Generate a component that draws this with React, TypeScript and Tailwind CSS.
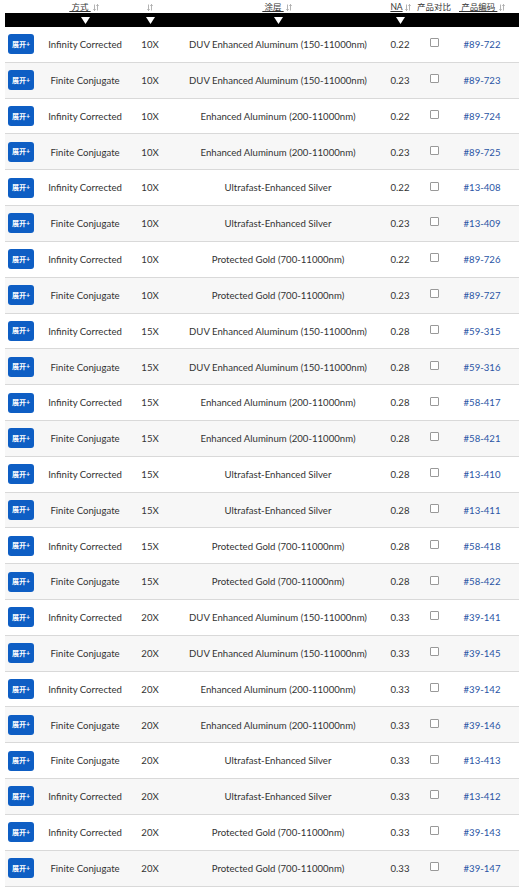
import React from "react";

type Row = [string, string, string, string, string];

const rows: Row[] = [
  ["Infinity Corrected", "10X", "DUV Enhanced Aluminum (150-11000nm)", "0.22", "#89-722"],
  ["Finite Conjugate", "10X", "DUV Enhanced Aluminum (150-11000nm)", "0.23", "#89-723"],
  ["Infinity Corrected", "10X", "Enhanced Aluminum (200-11000nm)", "0.22", "#89-724"],
  ["Finite Conjugate", "10X", "Enhanced Aluminum (200-11000nm)", "0.23", "#89-725"],
  ["Infinity Corrected", "10X", "Ultrafast-Enhanced Silver", "0.22", "#13-408"],
  ["Finite Conjugate", "10X", "Ultrafast-Enhanced Silver", "0.23", "#13-409"],
  ["Infinity Corrected", "10X", "Protected Gold (700-11000nm)", "0.22", "#89-726"],
  ["Finite Conjugate", "10X", "Protected Gold (700-11000nm)", "0.23", "#89-727"],
  ["Infinity Corrected", "15X", "DUV Enhanced Aluminum (150-11000nm)", "0.28", "#59-315"],
  ["Finite Conjugate", "15X", "DUV Enhanced Aluminum (150-11000nm)", "0.28", "#59-316"],
  ["Infinity Corrected", "15X", "Enhanced Aluminum (200-11000nm)", "0.28", "#58-417"],
  ["Finite Conjugate", "15X", "Enhanced Aluminum (200-11000nm)", "0.28", "#58-421"],
  ["Infinity Corrected", "15X", "Ultrafast-Enhanced Silver", "0.28", "#13-410"],
  ["Finite Conjugate", "15X", "Ultrafast-Enhanced Silver", "0.28", "#13-411"],
  ["Infinity Corrected", "15X", "Protected Gold (700-11000nm)", "0.28", "#58-418"],
  ["Finite Conjugate", "15X", "Protected Gold (700-11000nm)", "0.28", "#58-422"],
  ["Infinity Corrected", "20X", "DUV Enhanced Aluminum (150-11000nm)", "0.33", "#39-141"],
  ["Finite Conjugate", "20X", "DUV Enhanced Aluminum (150-11000nm)", "0.33", "#39-145"],
  ["Infinity Corrected", "20X", "Enhanced Aluminum (200-11000nm)", "0.33", "#39-142"],
  ["Finite Conjugate", "20X", "Enhanced Aluminum (200-11000nm)", "0.33", "#39-146"],
  ["Finite Conjugate", "20X", "Ultrafast-Enhanced Silver", "0.33", "#13-413"],
  ["Infinity Corrected", "20X", "Ultrafast-Enhanced Silver", "0.33", "#13-412"],
  ["Infinity Corrected", "20X", "Protected Gold (700-11000nm)", "0.33", "#39-143"],
  ["Finite Conjugate", "20X", "Protected Gold (700-11000nm)", "0.33", "#39-147"],
];

const cols = "grid grid-cols-[35px_90px_40px_216px_27px_42px_64px]";

function SortIcon() {
  return (
    <svg width="6" height="7" viewBox="0 0 6 7" className="ml-[2px] inline-block" fill="none" stroke="#a0a0a0" strokeWidth="0.8">
      <path d="M1.5 0.5 V6.5 M0.3 5.2 L1.5 6.5 L2.7 5.2" />
      <path d="M4.5 6.5 V0.5 M3.3 1.8 L4.5 0.5 L5.7 1.8" />
    </svg>
  );
}

function Tri() {
  return (
    <svg width="9" height="7" viewBox="0 0 9 7">
      <path d="M0 0 H9 L4.5 7 Z" fill="#fff" />
    </svg>
  );
}

export default function App() {
  const font = { fontFamily: "Lato, 'Noto Sans CJK SC', sans-serif" };
  return (
    <div className="w-[519px] h-[890px] bg-white overflow-hidden" style={font}>
      <div className="ml-[5px] w-[514px]">
        {/* header labels */}
        <div className={`${cols} h-[13px] items-center pt-[1px] text-[8.5px] leading-[10px] text-[#333]`}>
          <div />
          <div className="flex justify-center items-center pr-[2px]">
            <span className="underline">&nbsp;方式&nbsp;</span>
            <SortIcon />
          </div>
          <div className="flex justify-center items-center pr-[3px]">
            <SortIcon />
          </div>
          <div className="flex justify-center items-center pr-[2px]">
            <span className="underline">&nbsp;涂层&nbsp;</span>
            <SortIcon />
          </div>
          <div className="flex justify-center items-center pl-[2px]">
            <span className="underline">NA</span>
            <SortIcon />
          </div>
          <div className="flex justify-center items-center">
            <span>产品对比</span>
          </div>
          <div className="flex justify-start items-center pl-[4px]">
            <span className="underline">&nbsp;产品编码&nbsp;</span>
            <SortIcon />
          </div>
        </div>
        {/* filter bar */}
        <div className={`${cols} h-[14px] bg-black items-center`}>
          <div />
          <div className="flex justify-center"><Tri /></div>
          <div className="flex justify-center"><Tri /></div>
          <div className="flex justify-center"><Tri /></div>
          <div className="flex justify-center pl-[1px]"><Tri /></div>
          <div />
          <div />
        </div>
        {/* rows */}
        {rows.map((r, i) => (
          <div
            key={i}
            className={`${cols} h-[35.82px] items-center border-b border-[#d9d9d9] text-[9.6px] text-[#333] ${i % 2 === 1 ? "bg-[#f7f7f7]" : "bg-white"}`}
          >
            <div className="pl-[3px]">
              <button className="w-[26px] h-[20px] rounded-[3px] bg-[#0e5ec4] text-white text-[7px] font-bold leading-none flex items-center justify-center">
                展开+
              </button>
            </div>
            <div className="text-center pt-[2px]">{r[0]}</div>
            <div className="text-center pt-[2px]">{r[1]}</div>
            <div className="text-center pt-[2px]">{r[2]}</div>
            <div className="text-center pt-[2px] pl-[1px]">{r[3]}</div>
            <div className="flex justify-center -mt-[3px]">
              <span className="w-[9px] h-[9px] border border-[#999] rounded-[1px] bg-white" />
            </div>
            <div className="text-center pt-[2px] pr-[10px] text-[#2a55a5]">{r[4]}</div>
          </div>
        ))}
      </div>
    </div>
  );
}
